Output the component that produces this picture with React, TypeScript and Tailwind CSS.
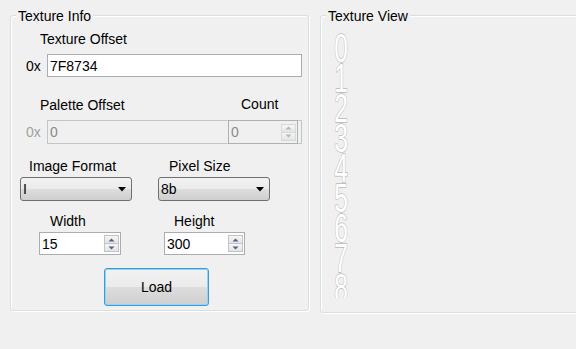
import React from "react";

function Arrow({ up, color }: { up: boolean; color: string }) {
  return (
    <svg width="7" height="4" viewBox="0 0 7 4" className="block">
      {up ? (
        <path d="M0.5 3.5 L3.5 0.5 L6.5 3.5 Z" fill={color} />
      ) : (
        <path d="M0.5 0.5 L3.5 3.5 L6.5 0.5 Z" fill={color} />
      )}
    </svg>
  );
}

function SpinButtons({ disabled }: { disabled?: boolean }) {
  const color = disabled ? "#b5b5b5" : "#4d6185";
  const border = disabled ? "border-[#d9d9d9]" : "border-[#c3c3c3]";
  return (
    <div className="mr-[1px] flex w-[15px] flex-col">
      <div
        className={`flex h-[9px] items-center justify-center border ${border} bg-[linear-gradient(to_bottom,#f6f6f6,#e4e4e4)]`}
      >
        <Arrow up color={color} />
      </div>
      <div
        className={`-mt-px flex h-[9px] items-center justify-center border ${border} bg-[linear-gradient(to_bottom,#f6f6f6,#e4e4e4)]`}
      >
        <Arrow up={false} color={color} />
      </div>
    </div>
  );
}

function Numeric({ value, width }: { value: string; width: string }) {
  return (
    <div
      className={`flex h-[23px] ${width} items-center border border-[#abadb3] bg-white`}
    >
      <span className="flex-1 pl-[2px] text-black">{value}</span>
      <SpinButtons />
    </div>
  );
}

function Combo({ value, width }: { value: string; width: string }) {
  return (
    <div
      className={`flex h-[24px] ${width} items-center rounded-[3px] border border-[#707070] bg-[linear-gradient(to_bottom,#f2f2f2_0%,#ebebeb_50%,#dddddd_51%,#cfcfcf_100%)]`}
    >
      <span className="flex-1 pl-[2px] text-black">{value}</span>
      <svg width="8" height="5" viewBox="0 0 8 5" className="mr-[5px] block">
        <path d="M0 0 H8 L4 4.5 Z" fill="#000" />
      </svg>
    </div>
  );
}

function GroupLabel({ text }: { text: string }) {
  return (
    <span className="absolute left-[5px] top-[-8px] bg-[#f0f0f0] px-[2px] leading-4 text-black">
      {text}
    </span>
  );
}

function TextureStrip() {
  const digits = ["0", "1", "2", "3", "4", "5", "6", "7", "8", "9"];
  return (
    <div className="ml-[12px] mt-[16px] h-[266px] w-[16px] overflow-hidden">
      <svg width="16" height="300" viewBox="0 0 16 300" className="block">
        <g transform="scale(0.6,1)">
          {digits.map((d, i) => (
            <text
              key={d}
              x="2"
              y={30 * i + 30}
              fontFamily="'Liberation Sans', Arial, sans-serif"
              fontSize="41"
              fill="#ffffff"
              stroke="#b8b8b8"
              strokeWidth="1.3"
              paintOrder="stroke"
            >
              {d}
            </text>
          ))}
        </g>
      </svg>
    </div>
  );
}

export default function App() {
  return (
    <div className="h-[349px] w-[576px] overflow-hidden bg-[#f0f0f0] font-['Liberation_Sans',Arial,sans-serif] text-[14px] leading-4 text-black">
      <div className="flex pl-[10px] pt-[15px]">
        {/* Texture Info */}
        <div className="relative h-[296px] w-[299px] shrink-0 rounded-[3px] border border-[#d5dfe5] shadow-[1px_1px_0_#ffffff,inset_1px_1px_0_#ffffff]">
          <GroupLabel text="Texture Info" />

          <div className="ml-[29px] mt-[15px]">Texture Offset</div>

          <div className="mt-[7px] flex items-center">
            <span className="ml-[15px] w-[21px]">0x</span>
            <div className="flex h-[23px] w-[255px] items-center border border-[#abadb3] bg-white pl-[2px]">
              7F8734
            </div>
          </div>

          <div className="mt-[20px] flex">
            <span className="ml-[29px] w-[201px]">Palette Offset</span>
            <span className="-mt-px">Count</span>
          </div>

          <div className="mt-[7px] flex items-center">
            <span className="ml-[15px] w-[21px] text-[#a0a0a0]">0x</span>
            <div className="relative h-[24px] w-[255px] border border-[#c2c5c9] bg-[#f0f0f0]">
              <span className="block pl-[2px] pt-[3px] text-[#8a8a8a]">0</span>
              <div className="absolute left-[180px] top-[-1px] flex h-[24px] w-[70px] items-center border border-[#adb2b5] bg-[#f0f0f0]">
                <span className="flex-1 pl-[2px] text-[#8a8a8a]">0</span>
                <SpinButtons disabled />
              </div>
            </div>
          </div>

          <div className="mt-[14px] flex">
            <span className="ml-[18px] w-[140px]">Image Format</span>
            <span>Pixel Size</span>
          </div>

          <div className="mt-[3px] flex">
            <div className="ml-[9px]">
              <Combo value="I" width="w-[112px]" />
            </div>
            <div className="ml-[26px]">
              <Combo value="8b" width="w-[112px]" />
            </div>
          </div>

          <div className="mt-[12px] flex">
            <span className="ml-[39px] w-[124px]">Width</span>
            <span>Height</span>
          </div>

          <div className="mt-[3px] flex">
            <div className="ml-[28px]">
              <Numeric value="15" width="w-[82px]" />
            </div>
            <div className="ml-[43px]">
              <Numeric value="300" width="w-[81px]" />
            </div>
          </div>

          <div className="ml-[93px] mt-[13px]">
            <button className="flex h-[38px] w-[105px] items-center justify-center rounded-[3px] border border-[#3c9ad8] bg-[linear-gradient(to_bottom,#f2f2f2_0%,#ebebeb_50%,#dddddd_51%,#cfcfcf_100%)] text-[14px] text-black shadow-[inset_0_0_0_1px_#8fd6f6]">
              Load
            </button>
          </div>
        </div>

        {/* Texture View */}
        <div className="relative ml-[11px] h-[298px] w-[280px] shrink-0 rounded-[3px] border border-[#d5dfe5] shadow-[1px_1px_0_#ffffff,inset_1px_1px_0_#ffffff]">
          <GroupLabel text="Texture View" />
          <TextureStrip />
        </div>
      </div>
    </div>
  );
}
